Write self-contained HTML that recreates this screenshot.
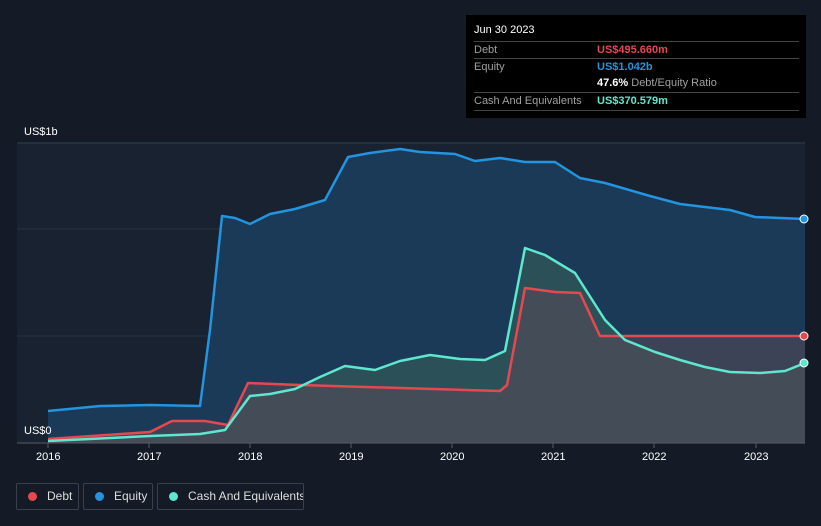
<!DOCTYPE html>
<html><head><style>
html,body{margin:0;width:821px;height:526px;overflow:hidden}
body{background:#151b26;font-family:"Liberation Sans",sans-serif;position:relative}
.tt{position:absolute;left:466px;top:15px;width:340px;height:103px;background:#000;color:#fff;font-size:11px}
.row{position:absolute;left:8px;width:325px;border-top:1px solid #444;height:17px;line-height:17px}
.lab{color:#a0a0a0;position:absolute;left:0}
.val{position:absolute;left:123px;font-weight:bold;white-space:nowrap}
.leg{position:absolute;top:483px;height:27px;border:1px solid #3a414c;border-radius:2px;color:#ddd;font-size:12px;line-height:25px;box-sizing:border-box;white-space:nowrap;overflow:hidden}
.dot{display:inline-block;width:9px;height:9px;border-radius:50%;margin:0 10px 0 11px;vertical-align:-1px}
.ax{position:absolute;color:#fff;font-size:11px}
</style></head><body>
<svg width="821" height="526" style="position:absolute;left:0;top:0">
<rect x="17" y="143" width="788" height="300" fill="#182231"/>
<line x1="17" y1="143" x2="805" y2="143" stroke="#333c48"/>
<line x1="17" y1="229" x2="805" y2="229" stroke="#2a3340"/>
<line x1="17" y1="336" x2="805" y2="336" stroke="#2a3340"/>
<path d="M48,411 L100,406 L150,405 L200,406 L210,330 L222,216 L235,218 L250,224 L270,214 L295,209 L325,200 L348,157 L370,153 L400,149 L420,152 L455,154 L475,161 L500,158 L525,162 L555,162 L580,178 L605,183 L650,196 L680,204 L730,210 L755,217 L805,219 L805,443 L48,443Z" fill="#1a3a57"/>
<path d="M48,441 L150,436 L200,434 L225,430 L250,396 L270,394 L295,389 L320,377 L345,366 L375,370 L400,361 L430,355 L460,359 L485,360 L505,351 L525,248 L545,255 L575,273 L605,320 L625,340 L655,352 L680,360 L705,367 L730,372 L760,373 L785,371 L805,363 L805,443 L48,443Z" fill="#2f5558" opacity=".85"/>
<path d="M48,439 L150,432 L172,421 L205,421 L228,425 L248,383 L300,385 L400,388 L500,391 L507,385 L525,288 L555,292 L580,293 L600,336 L805,336 L805,443 L48,443Z" fill="#5a4a58" opacity=".55"/>
<path d="M48,411 L100,406 L150,405 L200,406 L210,330 L222,216 L235,218 L250,224 L270,214 L295,209 L325,200 L348,157 L370,153 L400,149 L420,152 L455,154 L475,161 L500,158 L525,162 L555,162 L580,178 L605,183 L650,196 L680,204 L730,210 L755,217 L805,219" fill="none" stroke="#2394df" stroke-width="2.5" stroke-linejoin="round"/>
<path d="M48,439 L150,432 L172,421 L205,421 L228,425 L248,383 L300,385 L400,388 L500,391 L507,385 L525,288 L555,292 L580,293 L600,336 L805,336" fill="none" stroke="#e64850" stroke-width="2.5" stroke-linejoin="round"/>
<path d="M48,441 L150,436 L200,434 L225,430 L250,396 L270,394 L295,389 L320,377 L345,366 L375,370 L400,361 L430,355 L460,359 L485,360 L505,351 L525,248 L545,255 L575,273 L605,320 L625,340 L655,352 L680,360 L705,367 L730,372 L760,373 L785,371 L805,363" fill="none" stroke="#5ee6cf" stroke-width="2.5" stroke-linejoin="round"/>
<circle cx="804" cy="219" r="4" fill="#2394df" stroke="#fff" stroke-width="1"/>
<circle cx="804" cy="336" r="4" fill="#e64850" stroke="#fff" stroke-width="1"/>
<circle cx="804" cy="363" r="4" fill="#5ee6cf" stroke="#fff" stroke-width="1"/>
<line x1="17" y1="443" x2="805" y2="443" stroke="#555c66"/>
<g stroke="#555c66"><line x1="48" y1="443" x2="48" y2="448"/><line x1="149" y1="443" x2="149" y2="448"/><line x1="250" y1="443" x2="250" y2="448"/><line x1="351" y1="443" x2="351" y2="448"/><line x1="452" y1="443" x2="452" y2="448"/><line x1="553" y1="443" x2="553" y2="448"/><line x1="654" y1="443" x2="654" y2="448"/><line x1="756" y1="443" x2="756" y2="448"/></g>
</svg>
<div class="ax" style="left:24px;top:126px">US$1b</div>
<div class="ax" style="left:24px;top:425px">US$0</div>
<div class="ax" style="left:36px;top:451px">2016</div>
<div class="ax" style="left:137px;top:451px">2017</div>
<div class="ax" style="left:238px;top:451px">2018</div>
<div class="ax" style="left:339px;top:451px">2019</div>
<div class="ax" style="left:440px;top:451px">2020</div>
<div class="ax" style="left:541px;top:451px">2021</div>
<div class="ax" style="left:642px;top:451px">2022</div>
<div class="ax" style="left:744px;top:451px">2023</div>
<div class="tt">
<div style="position:absolute;left:8px;top:9px;font-size:11px">Jun 30 2023</div>
<div class="row" style="top:26px"><span class="lab">Debt</span><span class="val" style="color:#e64850">US$495.660m</span></div>
<div class="row" style="top:43px"><span class="lab">Equity</span><span class="val" style="color:#2394df">US$1.042b</span></div>
<div class="row" style="top:60px;border-top:none"><span class="val" style="color:#fff">47.6% <span style="font-weight:normal;color:#a0a0a0">Debt/Equity Ratio</span></span></div>
<div class="row" style="top:77px"><span class="lab">Cash And Equivalents</span><span class="val" style="color:#5ee6cf">US$370.579m</span></div>
<div class="row" style="top:95px;height:0"></div>
</div>
<div class="leg" style="left:16px;width:63px"><span class="dot" style="background:#e64850"></span>Debt</div>
<div class="leg" style="left:83px;width:70px"><span class="dot" style="background:#2394df"></span>Equity</div>
<div class="leg" style="left:157px;width:147px"><span class="dot" style="background:#5ee6cf"></span>Cash And Equivalents</div>
</body></html>
